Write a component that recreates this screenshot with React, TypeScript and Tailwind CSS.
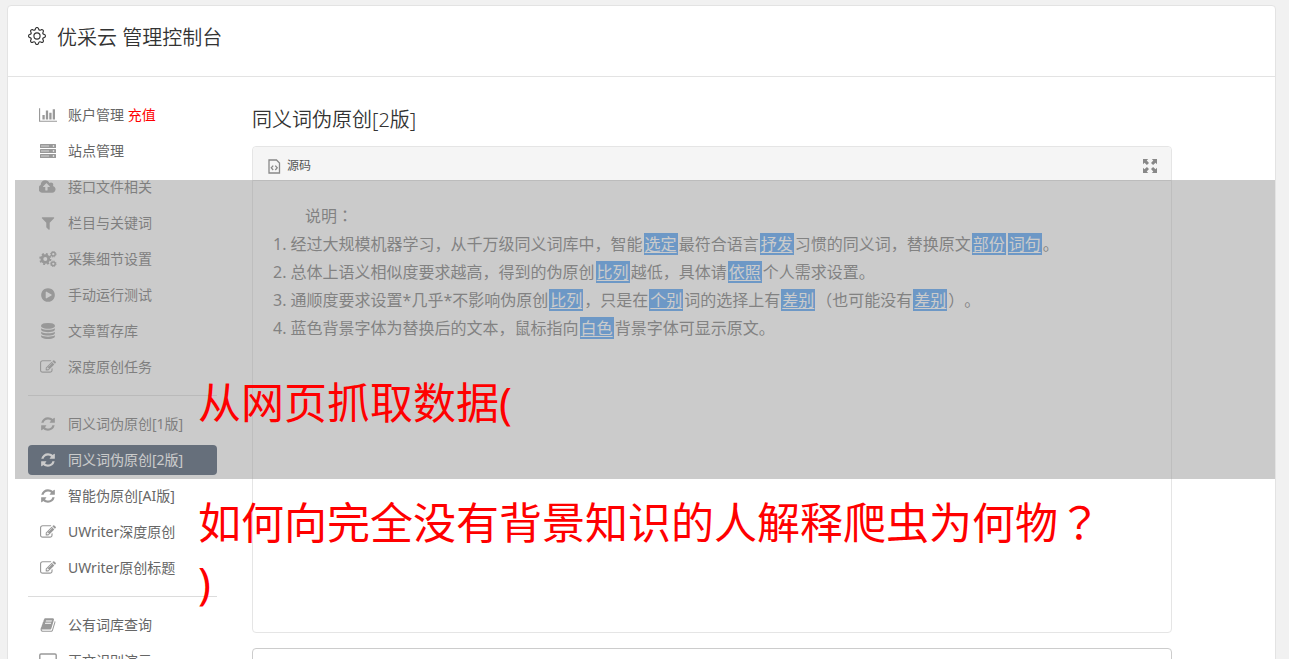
import React from 'react';
import { BsGear } from 'react-icons/bs';
import clsx from 'clsx';

const paths = {
  chart: 'M640 896v512h-256v-512h256zm384-512v1024h-256v-1024h256zm1024 1152v128h-2048v-1536h128v1408h1920zm-640-896v768h-256v-768h256zm384-384v1152h-256v-1152h256z',
  upload: 'M1216 864q0-14-9-23l-352-352q-9-9-23-9t-23 9l-351 351q-10 12-10 24 0 14 9 23t23 9h224v352q0 13 9.5 22.5t22.5 9.5h192q13 0 22.5-9.5t9.5-22.5v-352h224q13 0 22.5-9.5t9.5-22.5zm640 288q0 159-112.5 271.5t-271.5 112.5h-1088q-185 0-316.5-131.5t-131.5-316.5q0-130 70-240t188-165q-2-30-2-43 0-212 150-362t362-150q156 0 285.5 87t188.5 231q71-62 166-62 106 0 181 75t75 181q0 76-41 138 130 31 213.5 135.5t83.5 238.5z',
  filter: 'M1595 295q17 41-14 70l-493 493v742q0 42-39 59-13 5-25 5-27 0-45-19l-256-256q-19-19-19-45v-486l-493-493q-31-29-14-70 17-39 59-39h1280q42 0 59 39z',
  play: 'M896 128q209 0 385.5 103t279.5 279.5 103 385.5-103 385.5-279.5 279.5-385.5 103-385.5-103-279.5-279.5-103-385.5 103-385.5 279.5-279.5 385.5-103zm384 823q32-18 32-55t-32-55l-544-320q-31-19-64-1-32 19-32 56v640q0 37 32 56 16 8 32 8 17 0 32-9z',
  database: 'M896 768q237 0 443-43t325-127v170q0 69-103 128t-280 93.5-385 34.5-385-34.5-280-93.5-103-128v-170q119 84 325 127t443 43zm0 768q237 0 443-43t325-127v170q0 69-103 128t-280 93.5-385 34.5-385-34.5-280-93.5-103-128v-170q119 84 325 127t443 43zm0-384q237 0 443-43t325-127v170q0 69-103 128t-280 93.5-385 34.5-385-34.5-280-93.5-103-128v-170q119 84 325 127t443 43zm0-1152q208 0 385 34.5t280 93.5 103 128v128q0 69-103 128t-280 93.5-385 34.5-385-34.5-280-93.5-103-128v-128q0-69 103-128t280-93.5 385-34.5z',
  edit: 'M888 1184l116-116-152-152-116 116v56h96v96h56zm440-720q-16-16-33 1l-350 350q-17 17-1 33t33-1l350-350q17-17 1-33zm80 594v190q0 119-84.5 203.5t-203.5 84.5h-832q-119 0-203.5-84.5t-84.5-203.5v-832q0-119 84.5-203.5t203.5-84.5h832q63 0 117 25 15 7 18 23 3 17-9 29l-49 49q-14 14-32 8-23-6-45-6h-832q-66 0-113 47t-47 113v832q0 66 47 113t113 47h832q66 0 113-47t47-113v-126q0-13 9-22l64-64q15-15 35-7t20 29zm-96-738l288 288-672 672h-288v-288zm444 132l-92 92-288-288 92-92q28-28 68-28t68 28l152 152q28 28 28 68t-28 68z',
  refresh: 'M1639 1056q0 5-1 7-64 268-268 434.5t-478 166.5q-146 0-282.5-55t-243.5-157l-129 129q-19 19-45 19t-45-19-19-45v-448q0-26 19-45t45-19h448q26 0 45 19t19 45-19 45l-137 137q71 66 161 102t187 36q134 0 250-65t186-179q11-17 53-117 8-23 30-23h192q13 0 22.5 9.5t9.5 22.5zm25-800v448q0 26-19 45t-45 19h-448q-26 0-45-19t-19-45 19-45l138-138q-148-137-349-137-134 0-250 65t-186 179q-11 17-53 117-8 23-30 23h-199q-13 0-22.5-9.5t-9.5-22.5v-7q65-268 270-434.5t480-166.5q146 0 284 55.5t245 156.5l130-129q19-19 45-19t45 19 19 45z',
  book: 'M1703 478q40 57 18 129l-275 906q-19 64-76.5 107.5t-122.5 43.5h-923q-77 0-148.5-53.5t-99.5-131.5q-24-67-2-127 0-4 3-27t4-37q1-8-3-21.5t-3-19.5q2-11 8-21t16.5-23.5 16.5-23.5q23-38 45-91.5t30-91.5q3-10 .5-30t-.5-28q3-11 17-28t17-23q21-36 42-92t25-90q1-9-2.5-32t.5-28q4-13 22-30.5t22-22.5q19-26 42.5-84.5t27.5-96.5q1-8-3-25.5t-2-26.5q2-8 9-18t18-23 17-21q8-12 16.5-30.5t15-35 16-36 19.5-32 26.5-23.5 36-11.5 47.5 5.5l-1 3q38-9 51-9h761q74 0 114 56t18 130l-274 906q-36 119-71.5 153.5t-128.5 34.5h-869q-27 0-38 15-11 16-1 43 24 70 144 70h923q29 0 56-15.5t35-41.5l300-987q7-22 5-57 38 15 59 43zm-1064 2q-4 13 2 22.5t20 9.5h608q13 0 25.5-9.5t16.5-22.5l21-64q4-13-2-22.5t-20-9.5h-608q-13 0-25.5 9.5t-16.5 22.5zm-83 256q-4 13 2 22.5t20 9.5h608q13 0 25.5-9.5t16.5-22.5l21-64q4-13-2-22.5t-20-9.5h-608q-13 0-25.5 9.5t-16.5 22.5z',
};

interface GlyphProps {
  d: string;
  width?: number;
}

const Glyph: React.FC<GlyphProps> = ({ d, width = 1792 }) => (
  <svg viewBox={`0 0 ${width} 1792`} className="h-4" fill="currentColor" aria-hidden="true">
    <path d={d} />
  </svg>
);

const ServerIcon = () => (
  <svg viewBox="0 0 18 16" className="h-4" aria-hidden="true">
    {[1, 6, 11].map((y) => (
      <g key={y}>
        <rect x="1" y={y} width="16" height="4" rx="0.5" fill="currentColor" />
        <path d={`M2 ${y + 2}h8`} stroke="#fff" strokeOpacity="0.6" strokeWidth="1" />
        <circle cx="14.5" cy={y + 2} r="0.8" fill="#fff" />
      </g>
    ))}
  </svg>
);

// One large cog with two small ones on its right
const CogsIcon = () => (
  <svg viewBox="0 0 18 16" className="h-4" fill="none" stroke="currentColor" aria-hidden="true">
    <circle cx="6.3" cy="8" r="3.4" strokeWidth="2.8" />
    <circle cx="6.3" cy="8" r="5.2" strokeWidth="1.8" strokeDasharray="2.04 2.04" />
    <circle cx="14.3" cy="3.2" r="1.9" strokeWidth="1.5" />
    <circle cx="14.3" cy="3.2" r="2.8" strokeWidth="1" strokeDasharray="1.1 1.1" />
    <circle cx="14.3" cy="12.8" r="1.9" strokeWidth="1.5" />
    <circle cx="14.3" cy="12.8" r="2.8" strokeWidth="1" strokeDasharray="1.1 1.1" />
  </svg>
);

const LaptopIcon = () => (
  <svg viewBox="0 0 18 16" className="h-4" fill="none" stroke="currentColor" aria-hidden="true">
    <rect x="0.8" y="1" width="16.4" height="11" rx="1.2" strokeWidth="1.4" />
    <path d="M5 15h8M9 12v3" strokeWidth="1.6" />
  </svg>
);

interface MenuItem {
  label: string;
  icon: React.ReactNode;
  extra?: string;
  active?: boolean;
}

const groups: MenuItem[][] = [
  [
    { label: '账户管理', icon: <Glyph d={paths.chart} width={2048} />, extra: '充值' },
    { label: '站点管理', icon: <ServerIcon /> },
    { label: '接口文件相关', icon: <Glyph d={paths.upload} width={1920} /> },
    { label: '栏目与关键词', icon: <Glyph d={paths.filter} /> },
    { label: '采集细节设置', icon: <CogsIcon /> },
    { label: '手动运行测试', icon: <Glyph d={paths.play} /> },
    { label: '文章暂存库', icon: <Glyph d={paths.database} /> },
    { label: '深度原创任务', icon: <Glyph d={paths.edit} /> },
  ],
  [
    { label: '同义词伪原创[1版]', icon: <Glyph d={paths.refresh} /> },
    { label: '同义词伪原创[2版]', icon: <Glyph d={paths.refresh} />, active: true },
    { label: '智能伪原创[AI版]', icon: <Glyph d={paths.refresh} /> },
    { label: 'UWriter深度原创', icon: <Glyph d={paths.edit} /> },
    { label: 'UWriter原创标题', icon: <Glyph d={paths.edit} /> },
  ],
  [
    { label: '公有词库查询', icon: <Glyph d={paths.book} /> },
    { label: '正文识别演示', icon: <LaptopIcon /> },
  ],
];

const Sidebar = () => (
  <nav className="w-[189px] flex-shrink-0">
    {groups.map((items, i) => (
      <ul
        key={i}
        className={clsx('flex flex-col gap-1.5', i > 0 && 'mt-[13px] border-t border-[#dcdcdc] pt-[13px]')}
      >
        {items.map((item) => (
          <li key={item.label}>
            <a
              href="#"
              className={clsx(
                'flex h-[30px] items-center gap-2.5 rounded pl-2.5 text-sm',
                item.active ? 'bg-[#35475f] text-white' : 'text-[#666]'
              )}
            >
              <span className={clsx('flex w-5 justify-center', !item.active && 'text-[#999]')}>
                {item.icon}
              </span>
              <span>
                {item.label}
                {item.extra && <span className="text-[#f00]"> {item.extra}</span>}
              </span>
            </a>
          </li>
        ))}
      </ul>
    ))}
  </nav>
);

// A word that was swapped for its synonym
const Word = ({ children }: { children: string }) => (
  <u className="mx-px bg-[#4298f4] px-px text-white underline-offset-2">{children}</u>
);

// Full-width mark centred in its cell
const Mark = ({ children }: { children: string }) => (
  <span className="font-['Noto_Sans_CJK_JP',sans-serif] leading-none">{children}</span>
);

const Editor = () => (
  <div className="rounded border border-[#e5e5e5]">
    <div className="flex h-[34px] items-center justify-between rounded-t border-b border-[#e0e0e0] bg-[#f5f5f5] px-3.5 pt-1">
      <button className="flex items-center gap-1.5 text-xs text-[#555]">
        <svg viewBox="0 0 14 16" className="h-4" fill="none" stroke="#888" strokeWidth="1.3" aria-hidden="true">
          <path d="M2 2h7.5l3 3v10H2z" />
          <path d="M6.2 7.6L4.3 9.8l1.9 2.2M8.3 7.6l1.9 2.2-1.9 2.2" />
        </svg>
        源码
      </button>
      <button aria-label="全屏" className="text-[#888]">
        <svg viewBox="0 0 14 14" className="size-3.5" fill="currentColor" aria-hidden="true">
          <path d="M0 0h5.2L3.7 1.5 6 3.9 3.9 6 1.5 3.7 0 5.2zM14 0v5.2l-1.5-1.5L10.1 6 8 3.9l2.3-2.4L8.8 0zM0 14V8.8l1.5 1.5L3.9 8 6 10.1l-2.3 2.4L5.2 14zM14 14H8.8l1.5-1.5L8 10.1 10.1 8l2.4 2.3L14 8.8z" />
        </svg>
      </button>
    </div>
    <div className="min-h-[451px] px-5 py-[21px] text-base leading-7 text-[#6c6c6c]">
      <p className="indent-8">说明<Mark>：</Mark></p>
      <ol>
        <li>
          1. 经过大规模机器学习，从千万级同义词库中，智能<Word>选定</Word>最符合语言<Word>抒发</Word>
          习惯的同义词，替换原文<Word>部份</Word><Word>词句</Word>。
        </li>
        <li>
          2. 总体上语义相似度要求越高，得到的伪原创<Word>比列</Word>越低，具体请<Word>依照</Word>个人需求设置。
        </li>
        <li>
          3. 通顺度要求设置*几乎*不影响伪原创<Word>比列</Word>，只是在<Word>个别</Word>词的选择上有
          <Word>差别</Word>（也可能没有<Word>差别</Word>）。
        </li>
        <li>
          4. 蓝色背景字体为替换后的文本，鼠标指向<Word>白色</Word>背景字体可显示原文。
        </li>
      </ol>
    </div>
  </div>
);

const App: React.FC = () => {
  return (
    <div className="relative h-screen overflow-hidden bg-[#f1f1f1] pt-[5px] pr-[13px] pl-[7px] font-['Noto_Sans','Noto_Sans_CJK_SC',sans-serif] [text-spacing-trim:space-all]">
      <div className="rounded border border-[#e3e3e3] bg-white">
        {/* Header */}
        <header className="flex h-[71px] items-start gap-[11px] border-b border-[#e3e3e3] px-5 pt-4">
          <BsGear size={18} className="mt-[5px] text-[#333]" />
          <h1 className="text-xl leading-8 font-[350] text-[#333]">优采云 管理控制台</h1>
        </header>

        <div className="flex gap-[35px] px-5 pt-[23px] pb-6">
          <Sidebar />
          <main className="max-w-[920px] flex-1">
            <h2 className="mb-2.5 pt-1 text-xl leading-8 font-[350] text-[#333]">同义词伪原创[2版]</h2>
            <Editor />
            <textarea
              aria-label="原文"
              className="mt-[15px] block h-40 w-full resize-none rounded border border-[#ccc] px-3 py-2"
            />
          </main>
        </div>
      </div>

      {/* Caption over the page */}
      <div className="absolute top-[180px] right-3.5 left-[15px] h-[299px] bg-[#979797]/50" />
      <div className="absolute top-[373px] right-[180px] left-[198px] text-[43px] leading-[60px] text-[#f00]">
        <p>从网页抓取数据(</p>
        <p className="mt-[60px]">如何向完全没有背景知识的人解释爬虫为何物<Mark>？</Mark></p>
        <p>)</p>
      </div>
    </div>
  );
};

export default App;
